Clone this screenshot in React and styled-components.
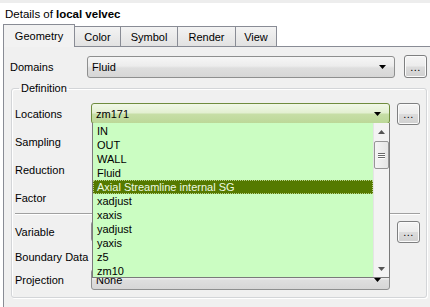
import React from 'react';
import styled, { createGlobalStyle, css } from 'styled-components';

const GlobalStyle = createGlobalStyle`
  * { box-sizing: border-box; }
  body {
    margin: 0;
    background: #fff;
    font-family: "Liberation Sans", Arial, sans-serif;
    font-size: 11px;
    color: #000;
  }
`

const Window = styled.div`
  width: 430px;
  height: 307px;
  overflow: hidden;
  display: flex;
  flex-direction: column;
`

const TopStrip = styled.div`
  height: 3px;
  background: #ededed;
`

const Title = styled.div`
  height: 21px;
  padding-left: 5px;
  display: flex;
  align-items: center;
  font-size: 11.5px;
  b { margin-left: 3px; }
`

const TabBar = styled.div`
  display: flex;
  align-items: flex-end;
  height: 23px;
  padding-left: 3px;
  margin-bottom: -1px;
  position: relative;
  z-index: 1;
`

const Tab = styled.div`
  width: ${p => p.w}px;
  display: flex;
  align-items: center;
  justify-content: center;
  border: 1px solid #898c95;
  margin-right: -1px;
  ${p => p.active ? css`
    height: 23px;
    border-bottom: none;
    background: #f2f2f2;
    position: relative;
    z-index: 2;
    padding-bottom: 1px;
  ` : css`
    height: 21px;
    background: linear-gradient(#f3f3f3, #e2e2e2);
    padding-top: 1px;
  `}
`

const Panel = styled.div`
  flex: 1;
  margin-left: 3px;
  border-top: 1px solid #898c95;
  border-left: 1px solid #898c95;
  background: #f0f0f0;
  padding: 8px 0 0 6px;
`

const Row = styled.div`
  display: flex;
  align-items: center;
  height: ${p => p.h || 21}px;
  margin-top: ${p => p.mt || 0}px;
  position: relative;
`

const Label = styled.div`
  width: ${p => p.w}px;
  flex-shrink: 0;
`

const Combo = styled.div`
  position: relative;
  width: ${p => p.w}px;
  height: ${p => p.h || 21}px;
  border: 1px solid ${p => p.green ? '#6f8c3e' : '#8e8f8f'};
  border-radius: 3px;
  background: ${p => p.green
    ? 'linear-gradient(#f1f8e8 0%, #e3f0d2 45%, #c6dea6 55%, #bcd898 100%)'
    : 'linear-gradient(#f6f6f6 0%, #ececec 45%, #dedede 55%, #d6d6d6 100%)'};
  display: flex;
  align-items: center;
  padding: 0 8px 0 4px;
  flex-shrink: 0;
`

const ComboText = styled.span`
  flex: 1;
`

const DotsButton = styled.div`
  width: ${p => p.w || 23}px;
  height: ${p => p.h || 22}px;
  margin-left: ${p => p.ml}px;
  border: 1px solid #7e7f80;
  border-radius: 3px;
  background: linear-gradient(#f5f5f5 0%, #ececec 48%, #dcdcdc 52%, #d0d0d0 100%);
  box-shadow: inset 0 0 0 1px #fbfbfb;
  display: flex;
  align-items: flex-end;
  justify-content: center;
  padding-bottom: 4px;
  line-height: 1;
  font-size: 11px;
  letter-spacing: 0.5px;
`

const Group = styled.fieldset`
  margin: 4px 0 0 1px;
  width: 416px;
  padding: 0 6px 7px 3px;
  border: 1px solid #d3d5d8;
  border-radius: 3px;
  box-shadow: inset 1px 1px 0 #fff, 1px 1px 0 #fff;
`

const Legend = styled.legend`
  margin-left: 4px;
  padding: 0 2px;
  line-height: 13px;
`

const Separator = styled.div`
  margin-top: 5px;
  height: 2px;
  border-top: 1px solid #a0a0a0;
  border-bottom: 1px solid #fff;
`

const DropList = styled.div`
  position: absolute;
  top: 100%;
  left: 0;
  width: 298px;
  height: 155px;
  border: 1px solid #7a7a7a;
  border-top: none;
  background: #cbfdc2;
  display: flex;
  z-index: 5;
`

const Items = styled.div`
  flex: 1;
  display: flex;
  flex-direction: column;
  padding-top: 1px;
`

const Item = styled.div`
  height: 14px;
  line-height: 14px;
  padding-left: 4px;
  white-space: nowrap;
  ${p => p.selected && css`
    background: #557a00;
    color: #eefbe0;
    outline: 1px dotted #b8d08a;
    outline-offset: -1px;
  `}
`

const ScrollBar = styled.div`
  width: 16px;
  background: #f3f3f3;
  border-left: 1px solid #e4e4e4;
  display: flex;
  flex-direction: column;
  align-items: center;
`

const ArrowCell = styled.div`
  height: 17px;
  width: 100%;
  display: flex;
  align-items: center;
  justify-content: center;
`

const Thumb = styled.div`
  width: 15px;
  height: 28px;
  margin-top: 1px;
  border: 1px solid #969696;
  border-radius: 2px;
  background: linear-gradient(90deg, #f4f4f4, #e6e6e6);
  display: flex;
  flex-direction: column;
  align-items: center;
  justify-content: center;
  gap: 1px;
  span {
    width: 7px;
    height: 1px;
    background: #6a6a6a;
    box-shadow: 0 1px 0 #fff;
  }
`

const Spacer = styled.div`
  flex: 1;
`

const Arrow = ({ up, color = '#000' }) => (
  <svg width="7" height="4" viewBox="0 0 7 4">
    <path d={up ? 'M0 4 L3.5 0 L7 4 Z' : 'M0 0 L7 0 L3.5 4 Z'} fill={color} />
  </svg>
)

const options = [
  'IN', 'OUT', 'WALL', 'Fluid', 'Axial Streamline internal SG',
  'xadjust', 'xaxis', 'yadjust', 'yaxis', 'z5', 'zm10',
]

const tabs = [
  { name: 'Geometry', w: 72, active: true },
  { name: 'Color', w: 47 },
  { name: 'Symbol', w: 58 },
  { name: 'Render', w: 59 },
  { name: 'View', w: 42 },
]

export default function App() {
  return (
    <Window>
      <GlobalStyle />
      <TopStrip />
      <Title>Details of <b>local velvec</b></Title>
      <TabBar>
        {tabs.map(t => (
          <Tab key={t.name} w={t.w} active={t.active}>{t.name}</Tab>
        ))}
      </TabBar>
      <Panel>
        <Row h={23}>
          <Label w={77}>Domains</Label>
          <Combo w={308} h={22}>
            <ComboText>Fluid</ComboText>
            <Arrow />
          </Combo>
          <DotsButton ml={9} h={23}>...</DotsButton>
        </Row>
        <Group>
          <Legend>Definition</Legend>
          <Row mt={8}>
            <Label w={76}>Locations</Label>
            <Combo w={299} green>
              <ComboText>zm171</ComboText>
              <Arrow />
              <DropList>
                <Items>
                  {options.map(o => (
                    <Item key={o} selected={o.startsWith('Axial')}>{o}</Item>
                  ))}
                </Items>
                <ScrollBar>
                  <ArrowCell><Arrow up color="#555" /></ArrowCell>
                  <Thumb><span /><span /><span /></Thumb>
                  <Spacer />
                  <ArrowCell><Arrow color="#555" /></ArrowCell>
                </ScrollBar>
              </DropList>
            </Combo>
            <DotsButton ml={7}>...</DotsButton>
          </Row>
          <Row mt={7}><Label w={76}>Sampling</Label></Row>
          <Row mt={7}><Label w={76}>Reduction</Label></Row>
          <Row mt={7}><Label w={76}>Factor</Label></Row>
          <Separator />
          <Row mt={6}>
            <Label w={76}>Variable</Label>
            <Combo w={299} />
            <DotsButton ml={7}>...</DotsButton>
          </Row>
          <Row mt={4}><Label w={76}>Boundary Data</Label></Row>
          <Row mt={2}>
            <Label w={76}>Projection</Label>
            <Combo w={299}>
              <ComboText>None</ComboText>
              <Arrow />
            </Combo>
          </Row>
        </Group>
      </Panel>
    </Window>
  );
}
